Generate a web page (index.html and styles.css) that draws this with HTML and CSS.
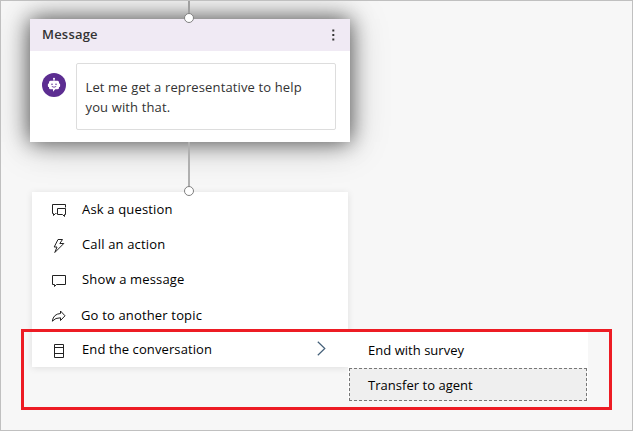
FILE: index.html
```html
<!DOCTYPE html>
<html lang="en">
<head>
<meta charset="utf-8">
<title>Authoring canvas</title>
<link rel="stylesheet" href="styles.css">
</head>
<body>
<main class="canvas">
  <div class="flow">
    <div class="line line-top"><span class="node"></span></div>
    <section class="card">
      <header class="card-head"><h2 class="title">Message</h2>
        <svg class="more" width="3" height="12" viewBox="0 0 3 12" fill="#333"><path d="M.3.5h2v2h-2zM.3 5h2v2h-2zM.3 9.500h2v2h-2z"/></svg>
      </header>
      <div class="card-body">
        <svg class="avatar" width="24" height="24" viewBox="0 0 24 24"><circle cx="12" cy="12" r="12" fill="#5c2d91"/><g fill="#fff"><circle cx="12" cy="5.800" r="1"/><path d="M11.600 6h.8v3h-.8z"/><path d="M8.500 7.800h7q1.500 0 1.500 1.500v1.200h.5q.6 0 .6.700v2q0 .8-.6.800H17v.8q0 1.500-1.500 1.500h-2.200L11 18.700V16.300H8.500Q7 16.300 7 14.800V14h-.5q-.6 0-.6-.8v-2q0-.7.600-.7H7V9.300q0-1.500 1.500-1.500z"/></g><g fill="#5c2d91"><circle cx="10" cy="11.200" r=".75"/><circle cx="14" cy="11.200" r=".75"/></g><path d="M9.800 13.400q2.200 1.700 4.400 0" fill="none" stroke="#5c2d91" stroke-width=".8"/></svg>
        <p class="message">Let me get a representative to help<br>you with that.</p>
      </div>
    </section>
    <div class="line line-bottom"><span class="node"></span></div>
    <nav class="menu">
      <div class="item"><svg width="16" height="16" viewBox="0 0 16 16"><path d="M5.500 10.500H4.500L2.500 12.500V10.500H1.500V1.500H14.500V4.500M6.500 5.500H14.500V11.500H13.500V13.500L11.500 11.500H6.500Z"/></svg><span>Ask a question</span></div>
      <div class="item"><svg width="16" height="16" viewBox="0 0 16 16"><path d="M7 1.500H11.500L8.800 5.500H12.800L3.800 14.500L6 9H3.200Z"/></svg><span>Call an action</span></div>
      <div class="item"><svg width="16" height="16" viewBox="0 0 16 16"><path d="M1.500 2.500H14.500V11.500H5.500L3.500 13.500V11.500H1.500Z"/></svg><span>Show a message</span></div>
      <div class="item shifted"><svg width="16" height="16" viewBox="0 0 16 16"><path d="M9.500 3L14 7.800L9.500 12.500V9.800Q4.500 9.500 1.300 13.200Q2.300 6 9.500 5.500Z"/></svg><span>Go to another topic</span></div>
      <div class="item"><svg width="16" height="16" viewBox="0 0 16 16"><path d="M3.500 1.500H12.500V14.500H3.500ZM3.500 4.500H12.500M3.500 10.500H12.500"/></svg><span class="end-label">End the conversation</span>
        <svg class="chevron" width="9" height="15" viewBox="0 0 9 15"><path d="M.8.800L7.800 7.500L.8 14.200"/></svg>
      </div>
      <div class="submenu">
        <div class="subitem"><span>End with survey</span></div>
        <div class="subitem focused"><span>Transfer to agent</span></div>
      </div>
    </nav>
  </div>
  <div class="highlight"></div>
</main>
</body>
</html>
```
FILE: styles.css
```css
* { box-sizing: border-box; }
body { margin: 0; font: 13px/20px "Open Sans", "Noto Sans", sans-serif; color: #000; }
.canvas { position: relative; width: 633px; height: 431px; border: 1px solid #c0c0c0; background: #f7f7f7; overflow: hidden; }
.flow { width: 320px; margin-left: 29px; display: flex; flex-direction: column; }
.line { position: relative; z-index: 2; width: 2px; margin-left: 158px; background: #b0b0b0; }
.line-top { height: 18px; background: #a0a0a0; }
.line-bottom { height: 50px; }
.node { position: absolute; left: -4px; bottom: -4px; width: 10px; height: 10px; border: 1px solid #808080; border-radius: 50%; background: #fff; }
.card { height: 123px; background: #fff; box-shadow: 0 0 20px rgba(0, 0, 0, .6), 0 2px 36px rgba(0, 0, 0, .25); }
.card-head { height: 32px; padding: 0 15px 0 12px; display: flex; align-items: center; justify-content: space-between; background: #f0eaf4; }
.title { margin: 0; padding-bottom: 3px; font-size: 13px; font-weight: 600; letter-spacing: .2px; color: #333; }
.card-body { display: flex; align-items: flex-start; gap: 10px; padding: 12px 14px 0 12px; }
.avatar { margin-top: 10px; }
.message { flex: 1; height: 67px; margin: 0; padding: 13px 8.500px; border: 1px solid #ddd; border-radius: 2px; color: #333; letter-spacing: .13px; white-space: nowrap; }
.menu { position: relative; width: 316px; height: 175px; margin-left: 2px; background: #fff; box-shadow: 0 1px 7px rgba(0, 0, 0, .1); }
.item { height: 35px; padding: 0 22px 0 19px; display: flex; align-items: center; gap: 15px; letter-spacing: .16px; white-space: nowrap; }
.item svg { flex: none; margin-top: 3px; fill: none; stroke: #222; stroke-width: 1; }
.item span { margin-top: -2px; }
.shifted { gap: 14px; }
.shifted span { margin-top: 1px; }
.item .end-label { letter-spacing: .1px; }
.item .chevron { margin: -3px 0 0 auto; stroke: #446079; stroke-width: 1.2; }
.submenu { position: absolute; left: 316px; top: 140px; width: 240px; background: #fff; letter-spacing: .03px; }
.subitem { height: 35px; padding: 1px 0 0 20px; display: flex; align-items: center; }
.focused { background: #efefef; padding-left: 19px; margin-left: 1px; width: 238px; height: 33px; margin-top: 1px; outline: 1px dashed #777; outline-offset: -1px; }
.highlight { position: absolute; left: 20px; top: 328px; width: 591px; height: 81px; border: 3px solid #ed1c24; }
```
